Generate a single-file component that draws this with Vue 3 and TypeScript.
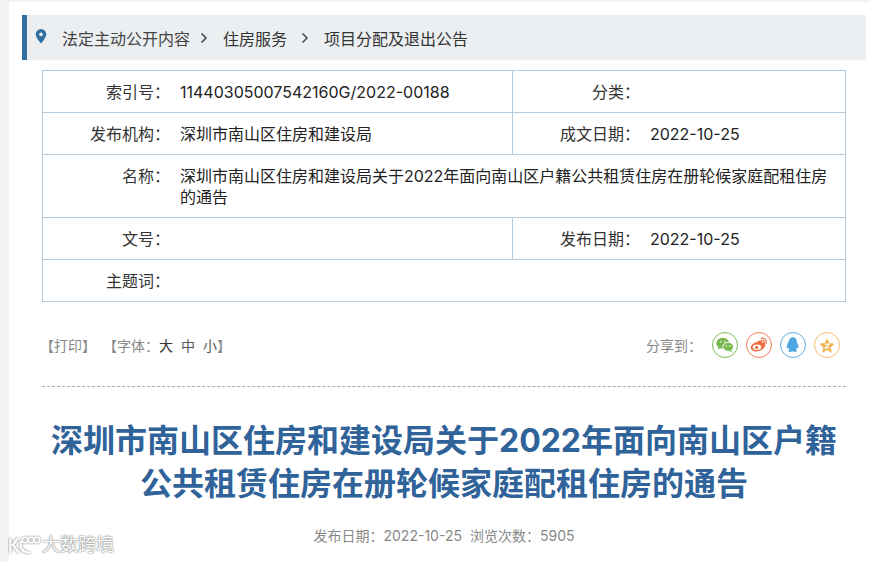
<script setup lang="ts">
interface Cell { label: string; value: string; wide?: boolean }
const rows: { cells: Cell[]; tall?: boolean }[] = [
  { cells: [{ label: '索引号:', value: '11440305007542160G/2022-00188' }, { label: '分类:', value: '' }] },
  { cells: [{ label: '发布机构:', value: '深圳市南山区住房和建设局' }, { label: '成文日期:', value: '2022-10-25' }] },
  { tall: true, cells: [{ label: '名称:', value: '深圳市南山区住房和建设局关于2022年面向南山区户籍公共租赁住房在册轮候家庭配租住房的通告', wide: true }] },
  { cells: [{ label: '文号:', value: '' }, { label: '发布日期:', value: '2022-10-25' }] },
  { cells: [{ label: '主题词:', value: '', wide: true }] },
]
</script>

<template>
  <div class="page">
    <main class="sheet">
      <nav class="crumb">
        <svg class="pin" width="12" height="15" viewBox="0 0 12 16"><path fill="#33709f" fill-rule="evenodd" d="M6 0a5.600 5.600 0 0 1 5.600 5.600C11.600 9.500 6 15.500 6 15.500S.4 9.500.4 5.600A5.600 5.600 0 0 1 6 0Zm0 3.600a2 2 0 1 0 0 4 2 2 0 0 0 0-4Z"/></svg>
        <span class="c1">法定主动公开内容</span>
        <svg class="chev" width="8" height="12" viewBox="0 0 8 12"><path d="M1.500 1.500 6 6l-4.500 4.500" fill="none" stroke="#444" stroke-width="1.500"/></svg>
        <span class="c2">住房服务</span>
        <svg class="chev ch2" width="8" height="12" viewBox="0 0 8 12"><path d="M1.500 1.500 6 6l-4.500 4.500" fill="none" stroke="#444" stroke-width="1.500"/></svg>
        <span class="c2">项目分配及退出公告</span>
      </nav>

      <section class="info">
        <div v-for="(r, i) in rows" :key="i" class="row" :class="{ tall: r.tall }">
          <div v-for="c in r.cells" :key="c.label" class="cell" :class="{ wide: c.wide }">
            <span class="label">{{ c.label.replace(':', '：') }}</span>
            <span class="value">{{ c.value }}</span>
          </div>
        </div>
      </section>

      <div class="tools">
        <div class="left">
          <span>【打印】</span>
          <span class="font">【字体：<b>大</b><i>中</i><i>小</i>】</span>
        </div>
        <div class="share">
          <span class="share-label">分享到：</span>
          <span class="ico wx">
            <svg width="20" height="18" viewBox="0 0 20 18"><ellipse cx="7.500" cy="7" rx="7" ry="6" fill="#78b94f"/><path d="M3 11l-.8 3 3.300-1.800z" fill="#78b94f"/><ellipse cx="13.500" cy="11" rx="5.800" ry="4.900" fill="#78b94f" stroke="#fff"/><path d="M16.500 14.500l1.200 2.500-3.400-1.500z" fill="#78b94f"/><circle cx="5.300" cy="5.500" r=".9" fill="#fff"/><circle cx="9.700" cy="5.500" r=".9" fill="#fff"/><circle cx="11.500" cy="10" r=".8" fill="#fff"/><circle cx="15.500" cy="10" r=".8" fill="#fff"/></svg>
          </span>
          <span class="ico wb">
            <svg width="20" height="18" viewBox="0 0 20 18"><path d="M8 5.500c3-2.200 5.500-1.800 5.200 1 3-.7 4.300 1 3.500 3.200C15.500 13.500 11 16 7 16c-3.500 0-6-1.800-6-4.300 0-2.300 3-5 7-6.200z" fill="#ee6f43"/><ellipse cx="7.800" cy="11.500" rx="4.600" ry="3" fill="#fff"/><circle cx="7.500" cy="11.600" r="1.800" fill="#ee6f43"/><path d="M12.500 1.500c3.500-.4 6 2.200 5.300 5.800M13 4c1.800-.2 2.900 1 2.600 2.700" fill="none" stroke="#ee6f43" stroke-width="1.300" stroke-linecap="round"/></svg>
          </span>
          <span class="ico qq">
            <svg width="16" height="18" viewBox="0 0 16 18"><path d="M8 .5c2.700 0 4.100 2.100 4.100 4.800 0 1 1.900 3.700 1.900 6.200 0 1.700-.8 1.600-1.600.3-.2 1-.6 1.800-1.300 2.500 1.100.5 1.500 1 1.200 1.500-.4.700-2.500.7-4.200.2-.2.100-.8.100-1 0-1.700.5-3.800.5-4.200-.2-.3-.5.100-1 1.200-1.500-.7-.7-1.100-1.500-1.300-2.500-.8 1.300-1.600 1.400-1.600-.3 0-2.500 1.900-5.200 1.900-6.200C3.900 2.600 5.300.5 8 .5z" fill="#4ea7e2"/></svg>
          </span>
          <span class="ico st">
            <svg width="18" height="17" viewBox="0 0 18 17"><path d="M9 .5l2.500 5.300 5.800.7-4.300 4 1.200 5.800L9 13.400l-5.200 2.900L5 10.500.7 6.500l5.800-.7z" fill="#f3b24e"/><path d="M6.500 7h5l-4.500 4h4.500" fill="none" stroke="#fff" stroke-width="1.300"/></svg>
          </span>
        </div>
      </div>

      <hr class="dash" />

      <h1 class="title">深圳市南山区住房和建设局关于2022年面向南山区户籍<br />公共租赁住房在册轮候家庭配租住房的通告</h1>
      <p class="meta"><span>发布日期：2022-10-25</span><span>浏览次数：5905</span></p>
    </main>

    <div class="mark">
      <svg width="34" height="22" viewBox="0 0 34 22"><g fill="none" stroke="#fff" stroke-width="2.300" class="logo"><path d="M2.500 5v15M10 5l-5 7 6 8"/><path d="M13 8c-1.500 7 2 12 9 11.500"/><circle cx="17" cy="7" r="2.700" stroke-width="1.600"/><circle cx="23" cy="7" r="2.700" stroke-width="1.600"/><circle cx="29" cy="7" r="2.700" stroke-width="1.600"/></g></svg>
      <span>大数跨境</span>
    </div>
  </div>
</template>

<style>
html, body { margin: 0; background: #f2f2f2; }
</style>

<style scoped>
.page {
  position: relative;
  width: 870px;
  height: 562px;
  padding: 2px 0 0 9px;
  box-sizing: border-box;
  overflow: hidden;
  background: #f2f2f2;
  font-family: Inter, "Noto Sans CJK SC", sans-serif;
  color: #333;
}
.sheet {
  background: #fff;
  height: 560px;
  padding: 13px 4px 0 13px;
  box-sizing: border-box;
}
.crumb {
  display: flex;
  align-items: center;
  height: 45px;
  box-sizing: border-box;
  background: #eceff2;
  border-left: 5px solid #33709f;
  padding-left: 8px;
  font-size: 16px;
  color: #333;
}
.pin { margin-right: 15px; margin-top: -3px; }
.c1 { color: #444; }
.chev { margin: 0 15px 0 10px; }
.ch2 { margin-left: 14px; margin-right: 15px; }
.info {
  margin: 10px 0 0 20px;
  width: 804px;
  box-sizing: border-box;
  border: 1px solid #b5cbdc;
  border-bottom: 0;
  font-size: 16px;
  line-height: 20px;
}
.row {
  display: flex;
  height: 42px;
  border-bottom: 1px solid #b5cbdc;
  box-sizing: border-box;
}
.tall { height: 63px; line-height: 21px; }
.cell {
  display: flex;
  align-items: center;
  width: 469px;
  box-sizing: border-box;
  color: #333;
}
.cell:nth-child(2) {
  flex: 1;
  border-left: 1px solid #b5cbdc;
}
.tall .cell { align-items: flex-start; padding-top: 11px; }
.cell.wide { width: 100%; }
.label {
  flex: none;
  width: 127px;
  text-align: right;
  margin-right: 10px;
}
.value { color: #222; padding-right: 14px; }
.tools {
  display: flex;
  justify-content: space-between;
  align-items: center;
  height: 34px;
  margin: 26px 26px 0 18px;
  font-size: 14px;
  color: #888;
}
.left { display: flex; gap: 7px; }
.font b, .font i { font-weight: 400; font-style: normal; margin-right: 8px; }
.font b { color: #333; }
.font i { color: #555; }
.font i:last-of-type { margin-right: 0; }
.share { display: flex; align-items: center; gap: 8px; }
.share-label { margin-right: 2px; }
.ico {
  width: 26px;
  height: 26px;
  box-sizing: border-box;
  border-radius: 50%;
  border: 1px solid;
  display: flex;
  align-items: center;
  justify-content: center;
}
.wx { border-color: #7dbb5c; }
.wb { border-color: #ee7d56; }
.qq { border-color: #5eaee2; }
.st { border-color: #f3c06e; }
.ico svg { transform: scale(.92); }
.dash {
  margin: 24px 20px 0 20px;
  border: 0;
  border-top: 1px dashed #aaa;
}
.title {
  margin: 32px 0 0;
  padding: 0 20px 0 20px;
  text-align: center;
  font-size: 32px;
  line-height: 43px;
  font-weight: 700;
  color: #2f6399;
}
.meta {
  margin: 21px 0 0;
  text-align: center;
  font-size: 14px;
  line-height: 20px;
  color: #888;
  display: flex;
  justify-content: center;
  gap: 8px;
}
.mark {
  position: absolute;
  left: 8px;
  bottom: 7px;
  display: flex;
  align-items: flex-end;
  color: #fff;
  font-size: 18px;
  line-height: 20px;
  text-shadow: 0 0 2px #777, 0 0 1px #777;
}
.logo { filter: drop-shadow(0 0 1px #777); }
</style>
